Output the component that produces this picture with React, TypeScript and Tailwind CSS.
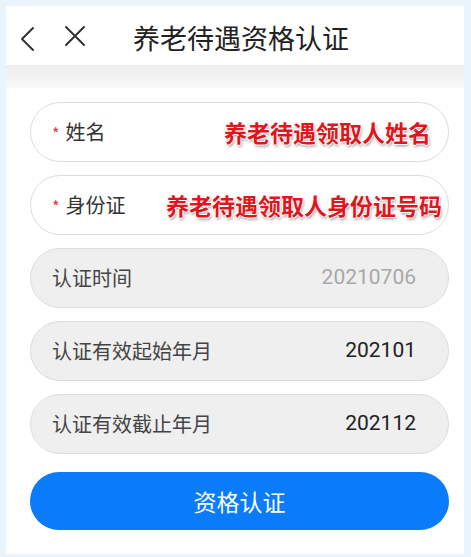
import React from "react";

const cjk = { fontFamily: '"Noto Sans CJK SC", "Noto Sans", sans-serif' };
const num = { fontFamily: 'Roboto, "Noto Sans CJK SC", sans-serif' };

function InputField({ label, note, noteLeft }: { label: string; note: string; noteLeft: number }) {
  return (
    <div className="relative h-[60px] shrink-0 rounded-full border border-[#dcdcdc] bg-white flex items-center pl-[21px]">
      <span className="text-[#d9363e] text-[16px] mr-[6px] mt-[2px]" style={cjk}>*</span>
      <span className="text-[20px] text-[#333]" style={cjk}>{label}</span>
      <span
        className="absolute top-1/2 -translate-y-1/2 whitespace-nowrap font-bold text-[23px] text-[#e0161e] [text-shadow:1px_0_0_#fff,-1px_0_0_#fff,0_1px_0_#fff,0_-1px_0_#fff,1px_2px_3px_rgba(0,0,0,0.45)]"
        style={{ ...cjk, left: noteLeft }}
      >
        {note}
      </span>
    </div>
  );
}

function InfoField({ label, value, muted }: { label: string; value: string; muted?: boolean }) {
  return (
    <div className="h-[60px] shrink-0 rounded-full border border-[#dcdcdc] bg-[#efefef] flex items-center justify-between pl-[21px] pr-[32px]">
      <span className="text-[20px] text-[#444]" style={cjk}>{label}</span>
      <span className={`text-[21px] ${muted ? "text-[#a8a8a8]" : "text-[#222]"}`} style={num}>{value}</span>
    </div>
  );
}

export default function App() {
  return (
    <div className="w-[471px] h-[557px] bg-[#eaf4fd] pt-[6px] pl-[6px] pr-[7px] pb-[3px]">
      <div className="h-full bg-white flex flex-col">
        <div className="h-[59px] shrink-0 flex items-center relative">
          <svg className="absolute left-[10px] top-[19px]" width="22" height="28" viewBox="0 0 22 28" fill="none">
            <path d="M17 3 L6 14 L17 25" stroke="#333" strokeWidth="2" strokeLinecap="round" strokeLinejoin="round" />
          </svg>
          <svg className="absolute left-[58px] top-[19px]" width="22" height="22" viewBox="0 0 22 22" fill="none">
            <path d="M2 2 L20 20 M20 2 L2 20" stroke="#333" strokeWidth="2" strokeLinecap="round" />
          </svg>
          <span className="absolute left-[127px] top-[13px] text-[27px] text-[#222] leading-[38px]" style={cjk}>
            养老待遇资格认证
          </span>
        </div>
        <div className="h-[23px] shrink-0 bg-gradient-to-b from-[#ededed] to-[#f8f8f8]" />
        <div className="flex flex-col gap-[13px] pl-[24px] pr-[15px] pt-[14px]">
          <InputField label="姓名" note="养老待遇领取人姓名" noteLeft={193} />
          <InputField label="身份证" note="养老待遇领取人身份证号码" noteLeft={135} />
          <InfoField label="认证时间" value="20210706" muted />
          <InfoField label="认证有效起始年月" value="202101" />
          <InfoField label="认证有效截止年月" value="202112" />
          <button
            className="mt-[5px] h-[58px] shrink-0 rounded-full bg-[#0a7bf9] text-white text-[23px] flex items-center justify-center"
            style={cjk}
          >
            资格认证
          </button>
        </div>
      </div>
    </div>
  );
}
